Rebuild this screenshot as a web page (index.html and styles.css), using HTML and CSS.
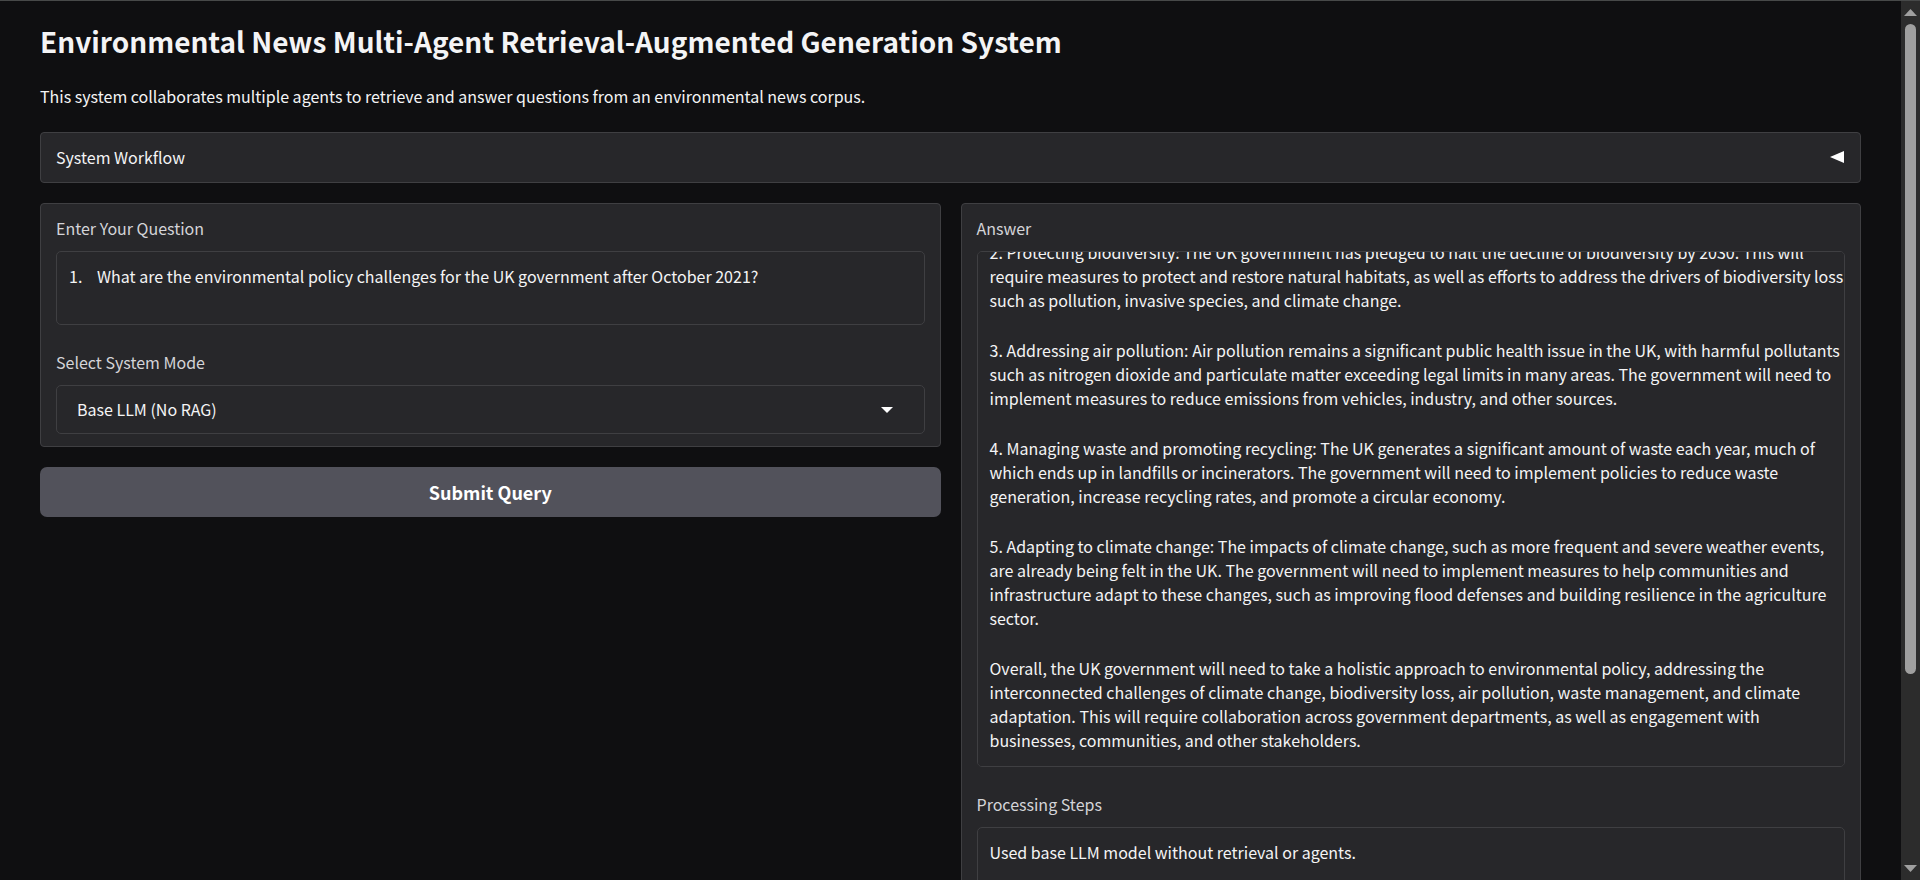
FILE: index.html
```html
<!DOCTYPE html>
<html lang="en">
<head>
<meta charset="utf-8">
<title>Environmental News Multi-Agent Retrieval-Augmented Generation System</title>
<link rel="stylesheet" href="styles.css">
</head>
<body>
<div class="viewport">
  <main class="page">
    <h1 class="title">Environmental News Multi-Agent Retrieval-Augmented Generation System</h1>
    <p class="intro">This system collaborates multiple agents to retrieve and answer questions from an environmental news corpus.</p>
    <button class="accordion" type="button" aria-expanded="false">
      <span>System Workflow</span>
      <svg class="accordion-icon" viewBox="0 0 14 12" aria-hidden="true"><path d="M0 6 14 0V12Z"/></svg>
    </button>
    <div class="columns">
      <form class="column">
        <div class="panel">
          <div class="field">
            <label class="label" for="question">Enter Your Question</label>
            <textarea class="box question" id="question">1.&#9;What are the environmental policy challenges for the UK government after October 2021?</textarea>
          </div>
          <div class="field">
            <label class="label" for="mode">Select System Mode</label>
            <div class="select-wrap">
              <select class="box mode" id="mode"><option>Base LLM (No RAG)</option></select>
              <svg class="caret" viewBox="0 0 12 6" aria-hidden="true"><path d="M0 0H12L6 6Z"/></svg>
            </div>
          </div>
        </div>
        <button class="submit" type="button">Submit Query</button>
      </form>
      <section class="column">
        <div class="panel">
          <div class="field">
            <label class="label" for="answer">Answer</label>
            <output class="box answer" id="answer">
              <p>2. Protecting biodiversity: The UK government has pledged to halt the decline of biodiversity by 2030. This will<br>require measures to protect and restore natural habitats, as well as efforts to address the drivers of biodiversity loss<br>such as pollution, invasive species, and climate change.</p>
              <p>3. Addressing air pollution: Air pollution remains a significant public health issue in the UK, with harmful pollutants<br>such as nitrogen dioxide and particulate matter exceeding legal limits in many areas. The government will need to<br>implement measures to reduce emissions from vehicles, industry, and other sources.</p>
              <p>4. Managing waste and promoting recycling: The UK generates a significant amount of waste each year, much of<br>which ends up in landfills or incinerators. The government will need to implement policies to reduce waste<br>generation, increase recycling rates, and promote a circular economy.</p>
              <p>5. Adapting to climate change: The impacts of climate change, such as more frequent and severe weather events,<br>are already being felt in the UK. The government will need to implement measures to help communities and<br>infrastructure adapt to these changes, such as improving flood defenses and building resilience in the agriculture<br>sector.</p>
              <p>Overall, the UK government will need to take a holistic approach to environmental policy, addressing the<br>interconnected challenges of climate change, biodiversity loss, air pollution, waste management, and climate<br>adaptation. This will require collaboration across government departments, as well as engagement with<br>businesses, communities, and other stakeholders.</p>
            </output>
          </div>
          <div class="field">
            <label class="label" for="steps">Processing Steps</label>
            <textarea class="box steps" id="steps" readonly>Used base LLM model without retrieval or agents.</textarea>
          </div>
        </div>
      </section>
    </div>
  </main>
  <div class="scrollbar" aria-hidden="true">
    <svg class="scroll-arrow" viewBox="0 0 13 7"><path d="M6.5 0 13 7H0Z"/></svg>
    <div class="track"><div class="thumb"></div></div>
    <svg class="scroll-arrow" viewBox="0 0 13 7"><path d="M0 0H13L6.5 7Z"/></svg>
  </div>
</div>
<script src="script.js"></script>
</body>
</html>
```

FILE: styles.css
```css
* { box-sizing: border-box; }

body {
  margin: 0;
  background: #0f0f11;
  color: #f4f4f5;
  font-family: "Noto Sans CJK SC", "Noto Sans", sans-serif;
  font-size: 16px;
  line-height: 24px;
}

button, select, textarea { font: inherit; color: inherit; }
p { margin: 0; }

.viewport {
  display: flex;
  height: 100vh;
  overflow: hidden;
  border-top: 1px solid #474949;
}

.page {
  flex: 1;
  min-width: 0;
  padding: 20px 40px 0;
  overflow: hidden;
}

.title {
  margin: 0;
  font-size: 28px;
  line-height: 41px;
  font-weight: 600;
}

.intro { margin: 22px 0 24px; }

.accordion {
  display: flex;
  align-items: center;
  justify-content: space-between;
  width: 100%;
  padding: 12px 16px 13px 15px;
  background: #27272a;
  border: 1px solid #3f3f42;
  border-radius: 4px;
  text-align: left;
}

.accordion-icon { width: 14px; height: 12px; fill: #fff; }

.columns {
  display: grid;
  grid-template-columns: 1fr 1fr;
  gap: 20px;
  margin-top: 20px;
}

.column {
  display: flex;
  flex-direction: column;
  gap: 20px;
  min-width: 0;
}

.panel {
  display: flex;
  flex-direction: column;
  gap: 25px;
  padding: 12px 15px;
  background: #27272a;
  border: 1px solid #3f3f42;
  border-radius: 4px;
}

.field { display: flex; flex-direction: column; gap: 11px; }
.label { color: #d4d4d8; }

.box {
  display: block;
  width: 100%;
  margin: 0;
  padding: 12px;
  background: #27272a;
  border: 1px solid #3f3f42;
  border-radius: 5px;
  resize: none;
  outline: none;
}

.question { height: 74px; tab-size: 28px; }

.select-wrap { position: relative; }
.mode { height: 49px; padding: 0 20px 1px; appearance: none; }
.caret {
  position: absolute;
  top: 22px;
  right: 32px;
  width: 12px;
  height: 6px;
  fill: #fff;
  pointer-events: none;
}

.submit {
  padding: 12px;
  background: #52525b;
  border: 0;
  border-radius: 7px;
  color: #fff;
  font-size: 18px;
  line-height: 26px;
  font-weight: 700;
}

.answer {
  height: 516px;
  padding: 12px 0 14px 12px;
  overflow-x: hidden;
  overflow-y: auto;
  scrollbar-width: none;
  white-space: nowrap;
}
.answer p + p { margin-top: 26px; }

.steps { height: 74px; }

.scrollbar {
  display: flex;
  flex-direction: column;
  align-items: center;
  gap: 8px;
  width: 19px;
  padding: 8px 0;
  background: #2c2c2c;
}
.scroll-arrow { width: 13px; height: 7px; fill: #9f9f9f; }
.track { flex: 1; width: 11px; }
.thumb { height: 78%; border-radius: 6px; background: #9f9f9f; }
```

FILE: script.js
```js
const answer = document.getElementById("answer");
answer.scrollTop = answer.scrollHeight;
```
